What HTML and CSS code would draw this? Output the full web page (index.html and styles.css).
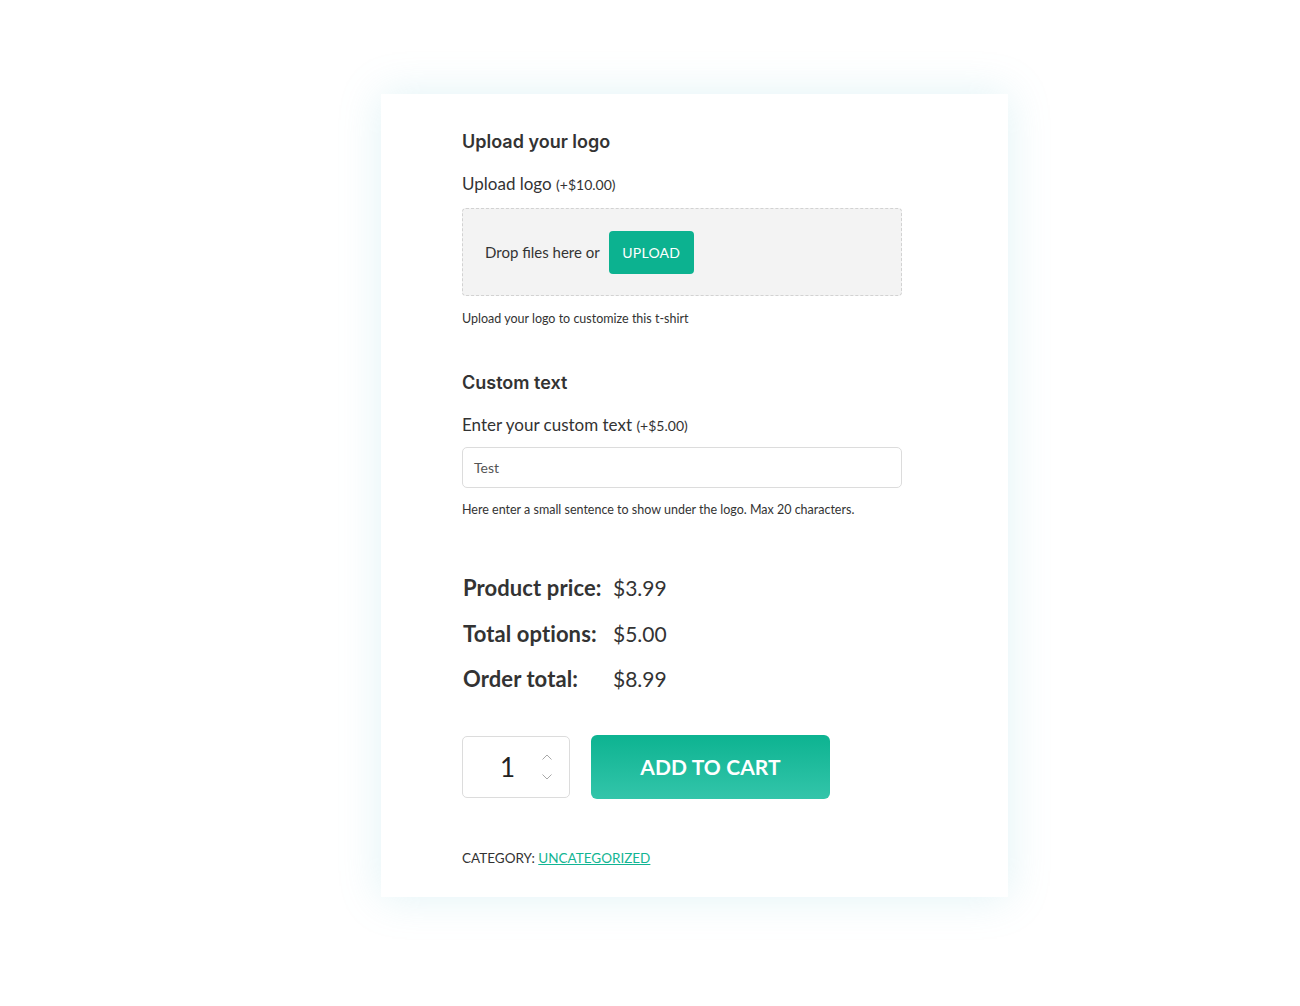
FILE: index.html
```html
<!DOCTYPE html>
<html>
<head>
<meta charset="utf-8">
<link rel="stylesheet" href="styles.css">
</head>
<body>
<div class="page">
  <div class="card">
    <section class="group">
      <h2 class="group-title">Upload your logo</h2>
      <div class="label">Upload logo <span class="price">(+$10.00)</span></div>
      <div class="dropzone">
        <span class="drop-text">Drop files here or</span>
        <button class="upload-btn">UPLOAD</button>
      </div>
      <p class="help">Upload your logo to customize this t-shirt</p>
    </section>
    <section class="group group-2">
      <h2 class="group-title">Custom text</h2>
      <div class="label">Enter your custom text <span class="price">(+$5.00)</span></div>
      <div class="text-input">Test</div>
      <p class="help help-2">Here enter a small sentence to show under the logo. Max 20 characters.</p>
    </section>
    <div class="totals">
      <div class="row"><span class="t-label">Product price:</span><span class="t-value">$3.99</span></div>
      <div class="row"><span class="t-label">Total options:</span><span class="t-value">$5.00</span></div>
      <div class="row"><span class="t-label">Order total:</span><span class="t-value">$8.99</span></div>
    </div>
    <div class="cart">
      <div class="qty">
        <span class="qty-num">1</span>
        <span class="spin">
          <svg width="12" height="8" viewBox="0 0 12 8"><path d="M1.5 6.5 L6 2 L10.5 6.5" fill="none" stroke="#a8a8a8" stroke-width="1"/></svg>
          <svg width="12" height="8" viewBox="0 0 12 8"><path d="M1.5 1.5 L6 6 L10.5 1.5" fill="none" stroke="#a8a8a8" stroke-width="1"/></svg>
        </span>
      </div>
      <button class="add-btn">ADD TO CART</button>
    </div>
    <div class="category">CATEGORY: <a href="#" class="cat-link">UNCATEGORIZED</a></div>
  </div>
</div>
</body>
</html>
```
FILE: styles.css
```css
* { box-sizing: border-box; }
html, body { margin: 0; padding: 0; background: #fff; }
body { font-family: "Lato", "Noto Sans", sans-serif; color: #333; }
.page { padding: 94px 0 109px 381px; display: flex; }
.card {
  width: 627px;
  height: 803px;
  background: #fff;
  box-shadow: 0 0 40px rgba(120, 200, 215, 0.22);
  padding: 0 106px 0 81px;
}
.group { padding-top: 36px; }
.group-2 { padding-top: 44px; }
.group-title {
  margin: 0;
  font-family: "Inter", sans-serif;
  font-weight: 600;
  font-size: 18px;
  line-height: 24px;
  color: #333;
}
.label { margin-top: 19px; font-size: 17px; line-height: 22px; color: #333; }
.price { font-size: 14px; }
.dropzone {
  margin-top: 12px;
  height: 88px;
  background: #f3f3f3;
  border: 1px dashed #d2d2d2;
  border-radius: 4px;
  display: flex;
  align-items: center;
  padding-left: 22px;
}
.drop-text { font-size: 15px; color: #333; }
.upload-btn {
  margin-left: 9px;
  width: 85px;
  height: 43px;
  background: #0cb290;
  border: none;
  border-radius: 4px;
  color: #fff;
  font-family: "Lato", sans-serif;
  font-size: 14px;
  letter-spacing: 0.2px;
}
.help { margin: 15px 0 0; font-size: 12.5px; line-height: 16px; color: #333; }
.help-2 { margin-top: 14px; }
.text-input {
  margin-top: 10px;
  height: 41px;
  border: 1px solid #dcdcdc;
  border-radius: 5px;
  padding-left: 11px;
  display: flex;
  align-items: center;
  font-size: 14px;
  color: #555;
}
.totals { margin-top: 47px; }
.row { display: flex; align-items: center; height: 45.5px; }
.t-label { width: 151px; font-weight: 700; font-size: 22px; color: #333; padding-left: 1px; letter-spacing: 0.1px; }
.t-value { font-size: 21px; color: #333; }
.cart { margin-top: 33px; display: flex; align-items: center; gap: 21px; }
.qty {
  width: 108px;
  height: 62px;
  border: 1px solid #dcdcdc;
  border-radius: 5px;
  display: flex;
  align-items: center;
  padding-left: 37px;
}
.qty-num { font-size: 26px; color: #222; width: 41px; }
.spin { display: flex; flex-direction: column; gap: 12px; }
.spin svg { display: block; }
.add-btn {
  width: 239px;
  height: 64px;
  border: none;
  border-radius: 6px;
  background: linear-gradient(#0db391, #33c5aa);
  color: #fff;
  font-family: "Lato", sans-serif;
  font-weight: 700;
  font-size: 21px;
  letter-spacing: 0.1px;
}
.category { margin-top: 51px; font-size: 13.5px; color: #333; }
.cat-link { color: #12b593; text-decoration: underline; }
```
